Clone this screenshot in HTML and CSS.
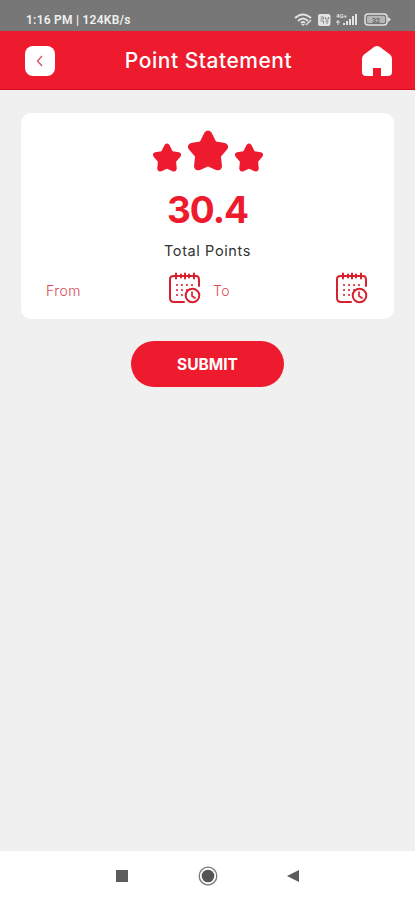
FILE: index.html
```html
<!DOCTYPE html>
<html lang="en">
<head>
<meta charset="utf-8">
<meta name="viewport" content="width=device-width, initial-scale=1">
<title>Point Statement</title>
<link rel="stylesheet" href="styles.css">
</head>
<body>
<svg class="defs" aria-hidden="true">
  <symbol id="star" viewBox="0 0 40 40"><path d="M16.500 2Q20-2 23.500 2L28 11L37 12.500Q42 14.500 39 19L33 26L34 36Q33 41 28 39.500L20 36L12 39.500Q7 41 6 36L7 26L1 19Q-2 14.500 3 12.500L12 11Z" fill="currentColor"/></symbol>
  <symbol id="calendar" viewBox="0 0 32 32"><g fill="none" stroke="currentColor" stroke-width="2" stroke-linecap="round"><path d="M15 30H5Q1 30 1 26V7Q1 4 5 4H27Q30 4 30 8V14M7 1.500V6.500M16 1.500V6.500M25 1.500V6.500M12 2.500V5.500M20 2.500V5.500"/><circle cx="23.500" cy="23.500" r="6.800"/><path d="M23 20V24L26 26" stroke-width="1.700"/></g><path d="M7 13H25M7 18H19M7 23H15" fill="none" stroke="currentColor" stroke-width="2" stroke-dasharray="2 3" opacity=".8"/></symbol>
</svg>
<div class="status">
  <span class="clock">1:16 PM | 124KB/s</span>
  <svg class="indicators" width="98" height="16" viewBox="0 0 98 16" fill="none" stroke="#e2e2e2">
    <path d="M1 6Q9-1 17 6M4 9Q9 4 14 9M7 11Q9 9 11 11" stroke-width="2"/><path d="M9 14L7 12H11Z" fill="#e2e2e2" stroke="none"/><path d="M12 13L17 8" stroke-width="1.500"/>
    <rect x="24" y="2" width="12.500" height="12" rx="2" fill="#e2e2e2" stroke="none"/><path d="M26.500 5H29.500V7H26.500M31.500 5V7H34.500V5M26.500 9H29.500V11.500M31.500 9H34.500M33 9V12" stroke="#888"/>
    <text x="42" y="6" class="network">4G+</text><path d="M44 8V13M42 10H46"/>
    <path d="M50 13V11M53 13V9M56 13V7M59 13V4M62 13V2" stroke-width="2"/>
    <rect x="71" y="2" width="22" height="11" rx="3" stroke-width="1.500"/><path d="M94 5L97 7.500L94 10Z" fill="#e2e2e2" stroke="none"/><rect x="73" y="4" width="18" height="7" rx="1" fill="#b5b5b5" stroke="none"/><text x="78" y="10.500" class="charge">32</text>
  </svg>
</div>
<header class="header">
  <button class="back" aria-label="Back"><svg width="10" height="14" viewBox="0 0 10 14"><path d="M7 2L2.500 7L7 12" fill="none" stroke="#d75566" stroke-width="1.400"/></svg></button>
  <h1 class="title">Point Statement</h1>
  <svg class="home" width="30" height="30" viewBox="0 0 30 30"><path d="M12 1Q15-1 18 1L28 8.500Q30 10 30 13V26Q30 30 26 30H19V22H11V30H4Q0 30 0 26V13Q0 10 2 8.500Z" fill="#fff"/></svg>
</header>
<main class="content">
  <section class="card">
    <div class="stars"><svg class="star"><use href="#star"/></svg><svg class="star star-large"><use href="#star"/></svg><svg class="star"><use href="#star"/></svg></div>
    <div class="score">30.4</div>
    <div class="caption">Total Points</div>
    <div class="dates">
      <div class="date"><span class="label">From</span><svg class="calendar"><use href="#calendar"/></svg></div>
      <div class="date"><span class="label">To</span><svg class="calendar"><use href="#calendar"/></svg></div>
    </div>
  </section>
  <button class="submit">SUBMIT</button>
</main>
<nav class="navigation">
  <svg width="186" height="20" viewBox="0 0 186 20"><rect x="1" y="4" width="12" height="12" fill="#5c5c5c"/><circle cx="93" cy="10" r="8.800" fill="none" stroke="#777" stroke-width="1.300"/><circle cx="93" cy="10" r="6.300" fill="#555"/><path d="M184 4V16L172 10Z" fill="#5c5c5c"/></svg>
</nav>
</body>
</html>
```
FILE: styles.css
```css
* { box-sizing: border-box; }
body { margin: 0; height: 900px; display: flex; flex-direction: column; background: #f0f0f0; font-family: Inter, "Liberation Sans", sans-serif; overflow: hidden; }
button { border: 0; padding: 0; font-family: inherit; }
.defs { position: absolute; width: 0; height: 0; }
.status { height: 31px; padding: 8px 23px 0 26px; display: flex; justify-content: space-between; align-items: center; background: #777; color: #f0f0f0; }
.clock { font: 600 12px/16px Roboto, sans-serif; letter-spacing: .25px; white-space: nowrap; }
.indicators { display: block; }
.network { font: bold 6px Roboto, sans-serif; fill: #e2e2e2; stroke: none; }
.charge { font: bold 7px Roboto, sans-serif; fill: #666; stroke: none; }
.header { height: 59px; padding: 1px 23px 0 25px; display: flex; align-items: center; justify-content: space-between; background: #ed1b2d; border-bottom: 1px solid #d70d1d; }
.back { width: 30px; height: 30px; display: grid; place-items: center; border-radius: 8px; background: #fff; }
.title { margin: 0; color: #fff; font-size: 21px; font-weight: 500; line-height: 30px; letter-spacing: .52px; white-space: nowrap; }
.content { flex: 1; padding: 23px 21px 0; display: flex; flex-direction: column; align-items: center; }
.card { width: 373px; height: 206px; padding-top: 17px; border-radius: 10px; background: #fff; color: #ed1b2d; }
.stars { display: flex; justify-content: center; align-items: flex-end; gap: 7px; height: 42px; }
.star { width: 28px; height: 29px; }
.star-large { width: 40px; height: 41px; margin-bottom: 1px; }
.score { margin-top: 16px; text-align: center; font-size: 37px; line-height: 44px; font-weight: 700; letter-spacing: -1px; }
.caption { margin-top: 9px; text-align: center; color: #333; font-size: 14.500px; line-height: 20px; letter-spacing: .6px; }
.dates { margin: 11px 26px 0 25px; display: flex; justify-content: space-between; }
.date { width: 155px; display: flex; align-items: center; justify-content: space-between; color: #d94a55; font-size: 14px; font-weight: 300; }
.label { padding-top: 4px; letter-spacing: .5px; }
.calendar { width: 32px; height: 32px; color: #d9202e; }
.submit { width: 153px; height: 46px; margin-top: 22px; border-radius: 23px; background: #ed1b2d; color: #fff; font-size: 15.500px; font-weight: 700; }
.navigation { height: 49px; display: flex; justify-content: center; align-items: center; background: #fff; }
```
